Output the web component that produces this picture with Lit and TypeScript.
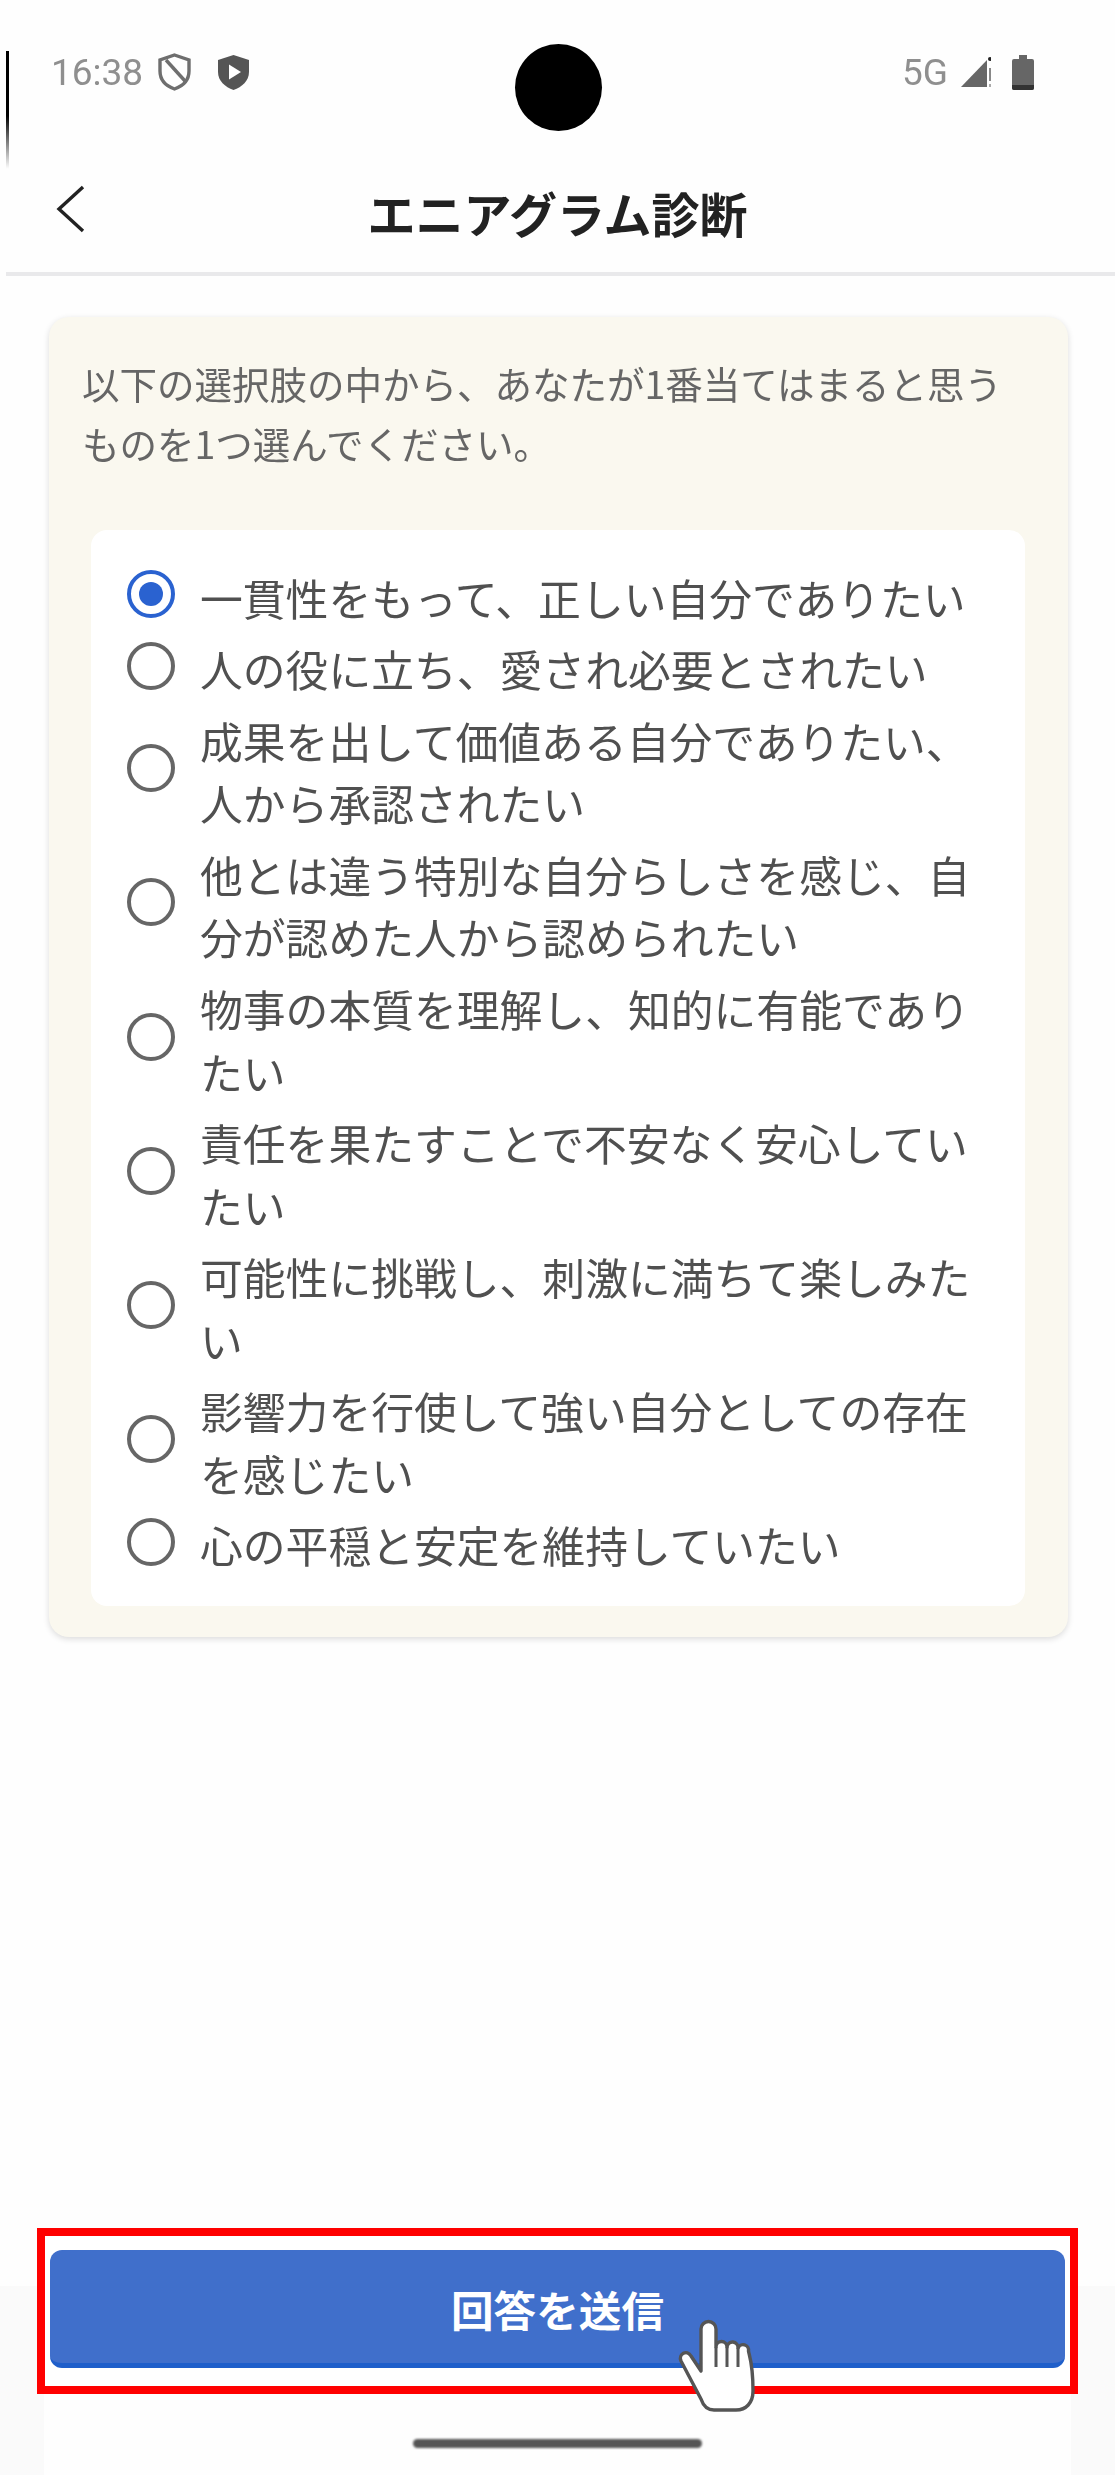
import { LitElement, html, css } from 'lit';
import { customElement } from 'lit/decorators.js';

const OPTIONS = [
  '一貫性をもって、正しい自分でありたい',
  '人の役に立ち、愛され必要とされたい',
  '成果を出して価値ある自分でありたい、人から承認されたい',
  '他とは違う特別な自分らしさを感じ、自分が認めた人から認められたい',
  '物事の本質を理解し、知的に有能でありたい',
  '責任を果たすことで不安なく安心していたい',
  '可能性に挑戦し、刺激に満ちて楽しみたい',
  '影響力を行使して強い自分としての存在を感じたい',
  '心の平穏と安定を維持していたい',
];

@customElement('app-root')
export class AppRoot extends LitElement {
  static styles = css`
    :host {
      display: flex;
      flex-direction: column;
      position: relative;
      width: 1115px;
      height: 2475px;
      overflow: hidden;
      background: #fefefe;
      font-family: 'Noto Sans CJK JP', 'Noto Sans', sans-serif;
    }

    /* ── Status bar ────────────────────────────────────────── */
    .status {
      display: flex;
      align-items: center;
      justify-content: space-between;
      box-sizing: border-box;
      height: 112px;
      padding: 32px 81px 0 51px;
      color: #8f8f8f;
      font-family: Roboto, sans-serif;
      font-size: 37px;
      filter: blur(0.7px);
    }
    .status-group {
      display: flex;
      align-items: center;
    }
    .clock { margin-right: 15px; }
    .shield-play { margin-left: 26px; }
    .net { margin-right: 13px; }
    .signal { margin-right: 21px; }
    .camera {
      position: absolute;
      left: 515px;
      top: 44px;
      width: 87px;
      height: 87px;
      border-radius: 50%;
      background: #000;
    }
    .edge {
      position: absolute;
      left: 6px;
      top: 51px;
      width: 3px;
      height: 118px;
      background: linear-gradient(#000 55%, #fff);
    }

    /* ── Header ────────────────────────────────────────────── */
    .header {
      display: flex;
      align-items: center;
      justify-content: center;
      position: relative;
      height: 160px;
      margin-left: 6px;
      border-bottom: 4px solid #e9e9eb;
    }
    .back {
      position: absolute;
      left: 48px;
      top: 73px;
    }
    .title {
      margin-right: 6px;
      margin-top: 40px;
      color: #222;
      font-size: 48px;
      font-weight: 700;
      line-height: 64px;
      filter: blur(0.5px);
    }

    /* ── Question card ─────────────────────────────────────── */
    .card {
      margin: 41px 47px 0 49px;
      padding: 36px 43px 31px 42px;
      border-radius: 20px;
      background: #faf8ef;
      box-shadow: 0 2px 6px rgba(0, 0, 0, 0.14);
    }
    .intro {
      margin: 0 0 57px -9px;
      color: #666;
      font-size: 37.5px;
      line-height: 60px;
      filter: blur(0.6px);
    }
    .choices {
      display: flex;
      flex-direction: column;
      gap: 8.5px;
      padding: 33px 25px 33px 36px;
      border-radius: 16px;
      background: #fff;
    }
    .choice {
      display: flex;
      align-items: center;
      gap: 25px;
    }
    .radio {
      display: flex;
      flex: none;
      align-items: center;
      justify-content: center;
      box-sizing: border-box;
      width: 48px;
      height: 48px;
      border: 4px solid #666;
      border-radius: 50%;
      filter: blur(0.5px);
    }
    .radio.on { border-color: #2a62d0; }
    .radio.on::after {
      content: '';
      width: 24px;
      height: 24px;
      border-radius: 50%;
      background: #2a62d0;
    }
    .label {
      margin-bottom: -3px;
      padding-top: 3px;
      color: #505050;
      font-size: 42.8px;
      line-height: 62.8px;
      filter: blur(0.6px);
    }

    .spacer { flex: 1; }

    /* ── Footer ────────────────────────────────────────────── */
    .footer {
      display: flex;
      flex-direction: column;
      height: 247px;
      background: linear-gradient(#fefefe 58px, #fafafa 58px);
    }
    .frame {
      box-sizing: border-box;
      height: 166px;
      margin: 0 37px;
      padding: 14px 5px 18px 5px;
      border: 8px solid #f00;
      background: #fff;
    }
    .submit {
      display: flex;
      align-items: center;
      justify-content: center;
      box-sizing: border-box;
      width: 100%;
      height: 118px;
      padding: 4px 0 0;
      border: 0;
      border-bottom: 5px solid #1f5fca;
      border-radius: 12px;
      background: #406fcb;
      color: #fff;
      font-family: inherit;
      font-size: 42.6px;
      font-weight: 700;
    }
    .home {
      display: flex;
      flex: 1;
      justify-content: center;
      margin: 0 44px;
      padding-top: 45px;
      background: #fefefe;
    }
    .home-bar {
      width: 289px;
      height: 9px;
      border-radius: 5px;
      background: #555;
      filter: blur(0.8px);
    }
    .cursor {
      position: absolute;
      left: 678px;
      top: 2319px;
    }
  `;

  render() {
    return html`
      <div class="status">
        <div class="status-group">
          <span class="clock">16:38</span>
          <svg width="33" height="38" viewBox="0 0 33 38" fill="none" stroke="#6e6e6e" stroke-width="3.4">
            <path d="M16.5 2 L31 7 V18 C31 27 25 33 16.5 36 C8 33 2 27 2 18 V7 Z" />
            <path d="M8 7 L27 28" />
          </svg>
          <svg class="shield-play" width="33" height="37" viewBox="0 0 33 37">
            <path d="M16.5 1 L32 6 V18 C32 27 25 33 16.5 36 C8 33 1 27 1 18 V6 Z" fill="#555" />
            <path d="M12 10.500 L24 18 L12 25.500 Z" fill="#fff" />
          </svg>
        </div>
        <div class="status-group">
          <span class="net">5G</span>
          <svg class="signal" width="30" height="32" viewBox="0 0 30 32">
            <path d="M0 31 L26 4 V31 Z" fill="#666" />
            <circle cx="29" cy="3" r="2" fill="#222" />
            <path d="M28 12 H30 V25 H28 Z" fill="#888" />
            <path d="M28 28 H30 V31 H28 Z" fill="#aaa" />
          </svg>
          <svg width="22" height="35" viewBox="0 0 22 35">
            <path d="M7 0 H15 V4 H20 A2 2 0 0 1 22 6 V33 A2 2 0 0 1 20 35 H2 A2 2 0 0 1 0 33 V6 A2 2 0 0 1 2 4 H7 Z" fill="#666" />
            <path d="M0 30 H22 V33 A2 2 0 0 1 20 35 H2 A2 2 0 0 1 0 33 Z" fill="#333" />
          </svg>
        </div>
      </div>
      <div class="camera"></div>
      <div class="edge"></div>

      <div class="header">
        <svg class="back" width="32" height="48" viewBox="0 0 32 48" fill="none" stroke="#222" stroke-width="3.4">
          <path d="M29 2 L5 24 L29 46" />
        </svg>
        <div class="title">エニアグラム診断</div>
      </div>

      <div class="card">
        <p class="intro">以下の選択肢の中から、あなたが1番当てはまると思うものを1つ選んでください。</p>
        <div class="choices">
          ${OPTIONS.map(
            (text, i) => html`
              <div class="choice">
                <span class="radio ${i === 0 ? 'on' : ''}"></span>
                <span class="label">${text}</span>
              </div>
            `
          )}
        </div>
      </div>

      <div class="spacer"></div>

      <div class="footer">
        <div class="frame">
          <button class="submit" type="button">回答を送信</button>
        </div>
        <div class="home"><div class="home-bar"></div></div>
      </div>

      <svg class="cursor" width="78" height="94" viewBox="0 0 78 94">
        <path
          d="M23 52 V10 a7.500 7.500 0 0 1 15 0 V28 a5.500 5.500 0 0 1 11 0 a5.500 5.500 0 0 1 11 1 a5.500 5.500 0 0 1 10.500 3 C71 36 75 44 75 72 C75 84 68 91 58 91 H36 C29 91 25 86 23 80 L3 42 C0 35 9 30 13 37 Z"
          fill="#fff"
          stroke="#555"
          stroke-width="3.4"
          stroke-linejoin="round"
        />
        <path d="M38 28 V48 M49 28 V48 M60 29 V48" fill="none" stroke="#555" stroke-width="3" />
      </svg>
    `;
  }
}
